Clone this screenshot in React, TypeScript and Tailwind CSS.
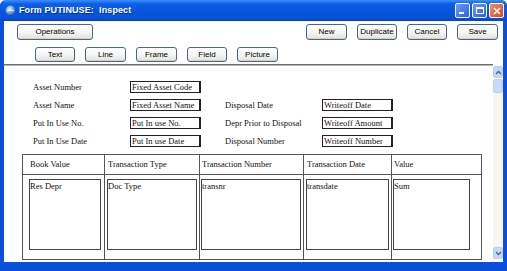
import React from 'react'

const sans = "[font-family:'Liberation_Sans',Arial,sans-serif]"
const serif = "[font-family:'Liberation_Serif','Times_New_Roman',serif]"

const Btn = ({ label, w, h }: { label: string; w: string; h: string }) => (
    <div
        className={`${w} ${h} ${sans} flex items-center justify-center rounded-[3px] border border-[#4a6690] bg-gradient-to-b from-white via-[#f6f6f2] to-[#e3e2dc] text-[8px] leading-none text-black shadow-[inset_0_-1px_0_#d6d0c0]`}
    >
        {label}
    </div>
)

const formRows = [
    { left: 'Asset Number', leftField: 'Fixed Asset Code', right: '', rightField: '' },
    { left: 'Asset Name', leftField: 'Fixed Asset Name', right: 'Disposal Date', rightField: 'Writeoff Date' },
    { left: 'Put In Use No.', leftField: 'Put In use No.', right: 'Depr Prior to Disposal', rightField: 'Writeoff Amount' },
    { left: 'Put In Use Date', leftField: 'Put In use Date', right: 'Disposal Number', rightField: 'Writeoff Number' },
]

// column: header, field text, padding-left inside the column, box width
const columns = [
    { head: 'Book Value', field: 'Res Depr', pl: 'pl-[6px]', w: 'w-[72px]', border: '' },
    { head: 'Transaction Type', field: 'Doc Type', pl: 'pl-[2px]', w: 'w-[90px]', border: 'border-l border-[#555]' },
    { head: 'Transaction Number', field: 'transnr', pl: 'pl-[1px]', w: 'w-[100px]', border: 'border-l border-[#555]' },
    { head: 'Transaction Date', field: 'transdate', pl: 'pl-[2px]', w: 'w-[83px]', border: 'border-l border-[#555]' },
    { head: 'Value', field: 'Sum', pl: 'pl-[1px]', w: 'w-[77px]', border: 'border-l border-[#555]' },
]

const Chevron = ({ up }: { up?: boolean }) => (
    <svg width="7" height="5" viewBox="0 0 7 5">
        <path d={up ? 'M1 4 L3.5 1.5 L6 4' : 'M1 1 L3.5 3.5 L6 1'} fill="none" stroke="#4d6185" strokeWidth="1.3" />
    </svg>
)

export default function App() {
    return (
        <div className="w-[507px] h-[271px] flex flex-col bg-[#0a50dc] overflow-hidden rounded-t-[6px]">
            {/* Title bar */}
            <div className="h-[21px] shrink-0 flex items-center pl-[5px] pr-[3px] bg-[linear-gradient(to_bottom,#3d8ff7_0%,#0d5fe8_18%,#0855dd_55%,#0652d9_85%,#0a44c0_100%)]">
                <svg width="11" height="11" viewBox="0 0 11 11" className="shrink-0">
                    <defs>
                        <radialGradient id="g" cx="40%" cy="35%" r="65%">
                            <stop offset="0%" stopColor="#e8f2ff" />
                            <stop offset="55%" stopColor="#6fa6e0" />
                            <stop offset="100%" stopColor="#2a5d9c" />
                        </radialGradient>
                    </defs>
                    <circle cx="5.5" cy="5.5" r="5" fill="url(#g)" />
                    <path d="M2 6 Q5.5 3.5 9 6" fill="none" stroke="#fff" strokeWidth="1" opacity="0.8" />
                </svg>
                <span className={`${sans} ml-[3px] text-[9px] font-bold text-white tracking-[0.1px] [text-shadow:1px_1px_0_#0a2f8a]`}>
                    Form PUTINUSE:&nbsp; Inspect
                </span>
                <div className="ml-auto flex gap-[2px]">
                    <div className="w-[15px] h-[15px] rounded-[2px] border border-white bg-gradient-to-br from-[#6d9cf5] to-[#2a5fe0] flex items-end justify-start pl-[3px] pb-[3px]">
                        <div className="w-[5px] h-[2px] bg-white" />
                    </div>
                    <div className="w-[15px] h-[15px] rounded-[2px] border border-white bg-gradient-to-br from-[#6d9cf5] to-[#2a5fe0] flex items-center justify-center">
                        <div className="w-[8px] h-[7px] border border-white border-t-2" />
                    </div>
                    <div className="w-[15px] h-[15px] rounded-[2px] border border-white bg-gradient-to-br from-[#f0906a] to-[#d2461e] flex items-center justify-center">
                        <svg width="8" height="8" viewBox="0 0 8 8">
                            <path d="M1 1 L7 7 M7 1 L1 7" stroke="#fff" strokeWidth="1.6" />
                        </svg>
                    </div>
                </div>
            </div>

            {/* Window body */}
            <div className="flex-1 px-[4px] pb-[9px] flex">
                <div className="flex-1 bg-white flex flex-col">
                    {/* Toolbar row 1 */}
                    <div className="flex items-center pt-[3px] pl-[13px] pr-[5px]">
                        <Btn label="Operations" w="w-[76px]" h="h-[16px]" />
                        <div className="ml-auto flex gap-[10px]">
                            <Btn label="New" w="w-[41px]" h="h-[16px]" />
                            <Btn label="Duplicate" w="w-[40px]" h="h-[16px]" />
                            <Btn label="Cancel" w="w-[40px]" h="h-[16px]" />
                            <Btn label="Save" w="w-[41px]" h="h-[16px]" />
                        </div>
                    </div>
                    {/* Toolbar row 2 */}
                    <div className="flex gap-[10px] mt-[7px] pl-[31px]">
                        <Btn label="Text" w="w-[40px]" h="h-[15px]" />
                        <Btn label="Line" w="w-[41px]" h="h-[15px]" />
                        <Btn label="Frame" w="w-[41px]" h="h-[15px]" />
                        <Btn label="Field" w="w-[40px]" h="h-[15px]" />
                        <Btn label="Picture" w="w-[41px]" h="h-[15px]" />
                    </div>

                    <div className="flex-1 flex mt-[2px]">
                        {/* Canvas */}
                        <div className="flex-1 flex flex-col">
                            <div className="h-[2px] bg-[#6f6f6f] border-b border-[#b5b5b5]" />
                            <div className={`${serif} text-[8.5px] leading-none text-[#111] pt-[15px]`}>
                                <div className="grid grid-cols-[97px_71px_24px_97px_71px] auto-rows-[12px] gap-y-[6px] pl-[29px]">
                                    {formRows.map((r) => (
                                        <React.Fragment key={r.left}>
                                            <div className="flex items-center">{r.left}</div>
                                            <div className="flex items-center border border-[#222] border-r-2 border-b-[1.5px] pl-[1px]">{r.leftField}</div>
                                            <div />
                                            <div className="flex items-center">{r.right}</div>
                                            {r.rightField ? (
                                                <div className="flex items-center border border-[#222] border-r-2 border-b-[1.5px] pl-[1px]">{r.rightField}</div>
                                            ) : (
                                                <div />
                                            )}
                                        </React.Fragment>
                                    ))}
                                </div>

                                {/* Table frame */}
                                <div className="ml-[18px] mt-[7px] w-[460px] border border-[#555] grid grid-cols-[81px_95px_104px_88px_90px]">
                                    {columns.map((c) => (
                                        <div key={c.head} className={`${c.border} flex flex-col`}>
                                            <div className={`h-[20px] border-b border-[#555] flex items-center ${c.pl}`}>
                                                <span className="pl-[1px]">{c.head}</span>
                                            </div>
                                            <div className={`h-[84px] pt-[4px] ${c.pl}`}>
                                                <div className={`${c.w} h-[71px] border border-[#444] pt-[2px]`}>{c.field}</div>
                                            </div>
                                        </div>
                                    ))}
                                </div>
                            </div>
                        </div>

                        {/* Scrollbar */}
                        <div className="w-[10px] flex flex-col pb-[3px]">
                            <div className="h-[2px] bg-white" />
                            <div className="h-[12px] rounded-[2px] bg-[#c5d6fb] border border-[#b8cbf3] flex items-center justify-center">
                                <Chevron up />
                            </div>
                            <div className="h-[14px] mt-[1px] rounded-[2px] bg-[#c9d9fc] border border-[#bccdf3]" />
                            <div className="flex-1 bg-[#f6f5f0]" />
                            <div className="h-[12px] rounded-[2px] bg-[#c5d6fb] border border-[#b8cbf3] flex items-center justify-center">
                                <Chevron />
                            </div>
                        </div>
                    </div>
                </div>
            </div>
        </div>
    )
}
